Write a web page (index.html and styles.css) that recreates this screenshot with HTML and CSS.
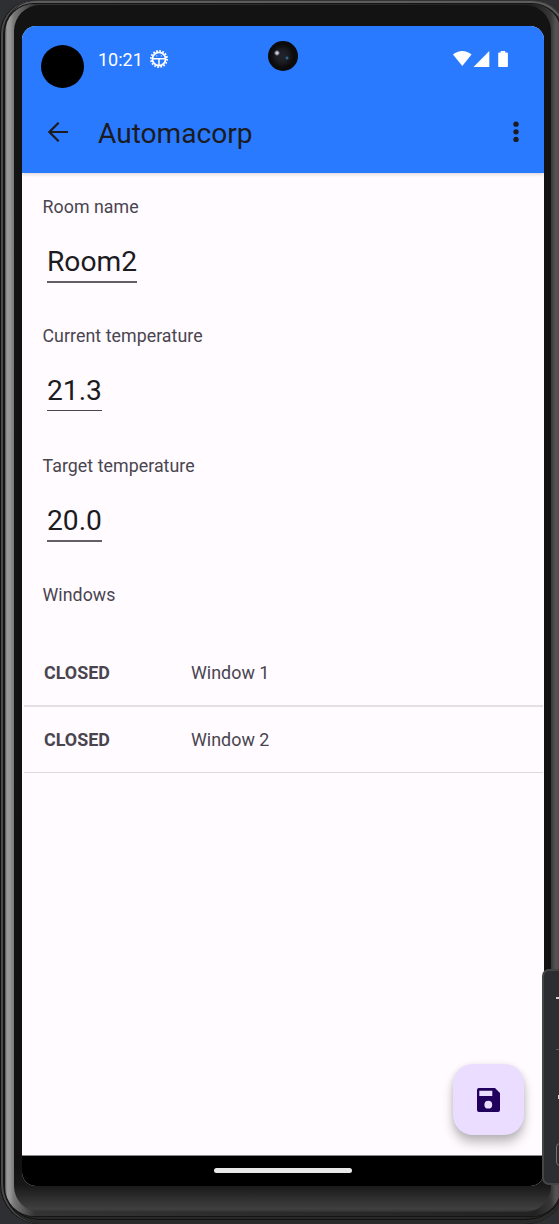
FILE: index.html
```html
<!DOCTYPE html>
<html lang="en">
<head>
<meta charset="utf-8">
<title>Automacorp</title>
<link rel="stylesheet" href="styles.css">
</head>
<body>
<div class="stage">
  <div class="shell">
    <div class="rim">
      <div class="bezel">
        <div class="screen">
          <header class="top">
            <div class="status">
              <span class="clock">10:21</span>
              <svg class="debug" viewBox="0 0 18 18" fill="none" stroke="#fff">
                <circle cx="9" cy="9" r="6.600" stroke-width="1.800"/>
                <circle cx="9" cy="9" r="8.100" stroke-width="1.800" stroke-dasharray="1.700 1.480"/>
                <path d="M2.500 8.700h13M9 9v6.500" stroke-width="1.500"/>
                <path d="M6.200 5.900h1M10.800 5.900h1" stroke-width="1"/>
              </svg>
              <svg class="signals" viewBox="0 0 56 18" fill="#fff">
                <path d="M0 4.600C5.200-.1 13.300-.1 18.500 4.600L9.300 16z"/>
                <path d="M20.500 17L36.300 1v16z"/>
                <path d="M45.200 3.200q0-.8.800-.8h1.700V1h4.500v1.400h1.900q.8 0 .8.800v13q0 .8-.8.800h-8.100q-.8 0-.8-.8z"/>
              </svg>
            </div>
            <div class="toolbar">
              <svg class="back" viewBox="0 0 20 20" fill="none" stroke="#1c1b1f" stroke-width="2.200"><path d="M20 10H1.500M10.700.700L1.400 10l9.300 9.300"/></svg>
              <h1 class="title">Automacorp</h1>
              <svg class="more" viewBox="0 0 6 22" fill="#1c1b1f"><circle cx="3" cy="3.200" r="2.650"/><circle cx="3" cy="10.800" r="2.650"/><circle cx="3" cy="18.400" r="2.650"/></svg>
            </div>
          </header>
          <main class="content">
            <section class="field"><div class="label">Room name</div><div class="value">Room2</div></section>
            <section class="field thin"><div class="label">Current temperature</div><div class="value">21.3</div></section>
            <section class="field"><div class="label">Target temperature</div><div class="value">20.0</div></section>
            <div class="label">Windows</div>
            <ul class="windows">
              <li class="row"><b class="state">CLOSED</b><span>Window 1</span></li>
              <li class="row last"><b class="state">CLOSED</b><span>Window 2</span></li>
            </ul>
          </main>
          <footer class="nav"><div class="pill"></div></footer>
          <div class="cutout"></div>
          <div class="camera"></div>
          <button class="fab" aria-label="Save">
            <svg class="disk" viewBox="0 0 23 24"><path fill="#21005d" fill-rule="evenodd" d="M2 0H18l5 5v17q0 2-2 2h-19Q0 24 0 22v-20Q0 0 2 0zM2.300 2.800v5.200h13V2.800zM11.300 12.800a3.900 3.900 0 1 0 0 7.800 3.900 3.900 0 0 0 0-7.800z"/></svg>
          </button>
        </div>
      </div>
    </div>
  </div>
  <aside class="tools">
    <i class="mark bright"></i><i class="mark dim"></i><i class="mark dot"></i><i class="mark box"></i>
  </aside>
</div>
</body>
</html>
```
FILE: styles.css
```css
body { margin: 0; background: #2e2f33; font-family: Roboto, "Noto Sans", sans-serif; }
.stage { position: relative; width: 559px; height: 1224px; overflow: hidden; }
.shell {
  box-sizing: border-box; width: 566px; height: 1224px; padding: 4px 5px 8px;
  border-radius: 34px 34px 40px 40px; background: #292929;
  box-shadow: inset 1px 0 #111, inset 3px 0 #4a4a4a, inset 4px 0 #151515, inset 0 1px #333, inset 0 4px #5c5c5c, inset 0 -4px #2a2a2a, inset 0 -5px #111;
}
.rim {
  box-sizing: border-box; width: 556px; height: 1212px; padding: 1px 8px 0 9px;
  border-radius: 29px; background: linear-gradient(90deg, #555 0, #999 2px, #969696 5px, #777 9px, #333 30px, #222 530px, #383838 546px, #555 551px, #4d4d4d 554px, #333 556px);
  box-shadow: 0 0 0 1px #151515;
}
.bezel {
  box-sizing: border-box; width: 537px; height: 1207px; padding: 21px 7px 25px 8px;
  border-radius: 26px; background: linear-gradient(#131313 0, #111 1160px, #181818 1180px, #404040 1204px, #303030 1207px);
}
.screen { position: relative; width: 522px; height: 1160px; border-radius: 14px; overflow: hidden; display: flex; flex-direction: column; background: #fffbff; }
.top { height: 147px; flex: none; background: #297aff; box-shadow: 0 1px 4px rgba(0,0,0,.18); }
.status { height: 66px; box-sizing: border-box; padding: 0 35px 0 76px; display: flex; align-items: center; color: #fff; }
.clock { font-size: 18px; }
.debug { width: 18px; height: 18px; margin-left: 7px; }
.signals { width: 56px; height: 18px; margin-left: auto; }
.toolbar { height: 80px; box-sizing: border-box; padding: 0 25px 0 26px; display: flex; align-items: center; }
.back { width: 20px; height: 20px; }
.title { margin: 4px 0 0 30px; font-size: 28.100px; font-weight: 400; line-height: 36px; color: #1c1b1f; }
.more { width: 6px; height: 22px; margin-left: auto; }
.content { flex: 1; padding-top: 21.500px; }
.field { height: 129.500px; }
.label { padding-left: 20.500px; font-size: 17.800px; letter-spacing: .05px; line-height: 24px; color: #49454f; }
.value { display: inline-block; margin: 25px 0 0 25px; height: 37px; line-height: 36px; font-size: 28.200px; color: #1c1b1f; border-bottom: 2px solid #625f67; }
.thin .value { border-bottom: 1px solid #49454f; }
.windows { list-style: none; margin: 32.500px 1px 0 2px; padding: 0; }
.row { height: 65px; display: flex; align-items: center; padding-left: 20px; border-bottom: 2px solid #e3dfe3; font-size: 17.900px; color: #49454f; }
.last { border-bottom: 1px solid #dedade; }
.state { width: 147px; font-weight: 700; }
.nav { height: 31px; flex: none; display: flex; align-items: center; justify-content: center; background: #000; border-top: 1px solid #888; box-sizing: border-box; padding-bottom: 1px; }
.pill { width: 138px; height: 5px; border-radius: 3px; background: #e9e9e9; }
.cutout { position: absolute; left: 19px; top: 19px; width: 43px; height: 43px; border-radius: 50%; background: #000; }
.camera { position: absolute; left: 246px; top: 15px; width: 30px; height: 30px; border-radius: 50%; background: radial-gradient(circle at 9px 12px, #fff 0, #99a 1.500px, transparent 3px), radial-gradient(circle at 19px 17px, #3b8bc0 0, transparent 2px), radial-gradient(circle at 14px 15px, #22232b 0, #1c1d24 6px, #101012 10px, #0b0b0c 12px); }
.fab { position: absolute; left: 431px; top: 1038px; width: 71px; height: 71px; padding: 0; border: 0; border-radius: 20px; background: #eaddff; box-shadow: 0 8px 11px rgba(0,0,0,.24), 0 1px 6px rgba(0,0,0,.1); display: flex; align-items: center; justify-content: center; }
.disk { width: 23px; height: 24px; }
.tools { position: absolute; left: 542px; top: 969px; width: 40px; height: 216px; box-sizing: border-box; border: 2px solid #444547; border-radius: 7px; background: #2b2d30; }
.mark { position: absolute; left: 12px; width: 12px; height: 2px; }
.bright { top: 26px; background: #ced0d6; }
.dim { top: 78px; height: 1px; background: #5a5b5f; }
.dot { left: 14px; top: 124px; height: 4px; background: #ced0d6; }
.box { top: 172px; height: 21px; border: 1.500px solid #6f7074; border-radius: 4px; }
```
